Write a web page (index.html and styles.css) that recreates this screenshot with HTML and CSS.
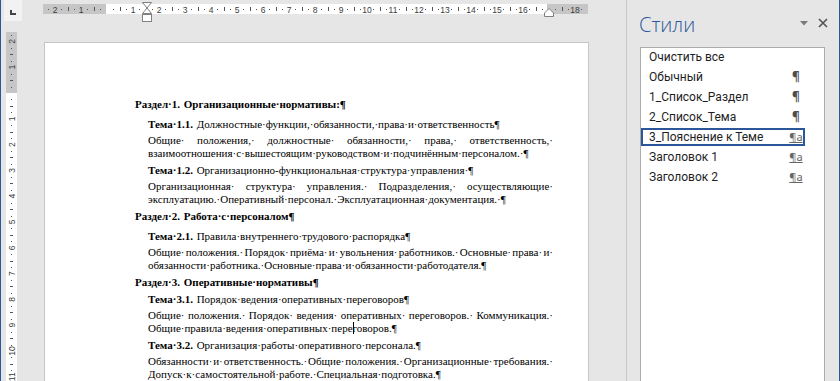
FILE: index.html
```html
<!DOCTYPE html>
<html lang="ru">
<head>
<meta charset="utf-8">
<link rel="stylesheet" href="styles.css">
</head>
<body>
<div class="window">
  <div class="doc-area">
    <div class="side">
      <div class="tab-sel">
        <svg width="18" height="21" viewBox="0 0 18 21"><path d="M6 10h2v3h4v2h-6z" fill="#444"/></svg>
      </div>
      <svg class="vruler" width="11" height="349" viewBox="0 0 11 349">
        <rect x="0" y="0" width="11" height="61" fill="#c6c6c6"/>
        <rect x="0" y="61" width="11" height="288" fill="#fff"/>
        <path fill="#555" d="M5 3h1v1h-1zM5 16h1v1h-1zM5 29h1v1h-1zM5 42h1v1h-1zM5 55h1v1h-1zM5 67h1v1h-1zM5 80h1v1h-1zM5 93h1v1h-1zM5 106h1v1h-1zM5 119h1v1h-1zM5 132h1v1h-1zM5 145h1v1h-1zM5 158h1v1h-1zM5 171h1v1h-1zM5 184h1v1h-1zM5 196h1v1h-1zM5 209h1v1h-1zM5 222h1v1h-1zM5 235h1v1h-1zM5 248h1v1h-1zM5 261h1v1h-1zM5 274h1v1h-1zM5 287h1v1h-1zM5 300h1v1h-1zM5 313h1v1h-1zM5 325h1v1h-1zM5 338h1v1h-1z"/>
        <path fill="#555" d="M4 22h3v1h-3zM4 48h3v1h-3zM4 74h3v1h-3zM4 100h3v1h-3zM4 125h3v1h-3zM4 151h3v1h-3zM4 177h3v1h-3zM4 203h3v1h-3zM4 229h3v1h-3zM4 254h3v1h-3zM4 280h3v1h-3zM4 306h3v1h-3zM4 332h3v1h-3z"/>
        <g class="rnum" text-anchor="middle">
          <text transform="translate(8.5 9.4) rotate(-90)">2</text>
          <text transform="translate(8.5 35.2) rotate(-90)">1</text>
          <text transform="translate(8.5 86.8) rotate(-90)">1</text>
          <text transform="translate(8.5 112.6) rotate(-90)">2</text>
          <text transform="translate(8.5 138.4) rotate(-90)">3</text>
          <text transform="translate(8.5 164.2) rotate(-90)">4</text>
          <text transform="translate(8.5 190) rotate(-90)">5</text>
          <text transform="translate(8.5 215.8) rotate(-90)">6</text>
          <text transform="translate(8.5 241.6) rotate(-90)">7</text>
          <text transform="translate(8.5 267.4) rotate(-90)">8</text>
          <text transform="translate(8.5 293.2) rotate(-90)">9</text>
          <text transform="translate(8.5 319) rotate(-90)">10</text>
          <text transform="translate(8.5 344.8) rotate(-90)">11</text>
        </g>
      </svg>
    </div>
    <div class="main">
      <svg class="hruler" width="546" height="24" viewBox="0 0 546 24">
        <defs>
          <pattern id="hticks" x="64" y="0" width="26" height="24" patternUnits="userSpaceOnUse">
            <rect x="6" y="9" width="1" height="1" fill="#555"/>
            <rect x="13" y="7" width="1" height="4" fill="#555"/>
            <rect x="19" y="9" width="1" height="1" fill="#555"/>
          </pattern>
        </defs>
        <rect x="0" y="4" width="63" height="10" fill="#c6c6c6"/>
        <rect x="63" y="4" width="441" height="10" fill="#fff"/>
        <rect x="504" y="4" width="41" height="10" fill="#c6c6c6"/>
        <rect x="0" y="4" width="545" height="10" fill="url(#hticks)"/>
        <g class="rnum" text-anchor="middle">
          <text x="12" y="12.5">2</text>
          <text x="38" y="12.5">1</text>
          <text x="90" y="12.5">1</text>
          <text x="116" y="12.5">2</text>
          <text x="142" y="12.5">3</text>
          <text x="168" y="12.5">4</text>
          <text x="194" y="12.5">5</text>
          <text x="220" y="12.5">6</text>
          <text x="246" y="12.5">7</text>
          <text x="272" y="12.5">8</text>
          <text x="298" y="12.5">9</text>
          <text x="324" y="12.5">10</text>
          <text x="350" y="12.5">11</text>
          <text x="376" y="12.5">12</text>
          <text x="402" y="12.5">13</text>
          <text x="428" y="12.5">14</text>
          <text x="454" y="12.5">15</text>
          <text x="480" y="12.5">16</text>
          <text x="532" y="12.5">18</text>
        </g>
        <g fill="#fff" stroke="#808080" stroke-width="1">
          <path d="M99.5 2.5h9l-4.5 5.5z"/>
          <path d="M104 8l4.5 5.5h-9z"/>
          <rect x="99.5" y="14.5" width="9" height="7"/>
          <path d="M506 8.5l4.5 4.5v3.5h-9v-3.5z"/>
        </g>
      </svg>
      <div class="page">
        <p class="razdel"><span class="num">Раздел·1. </span>Организационные· нормативы:¶</p>
        <p class="tema"><b class="num">Тема·1.1. </b>Должностные· функции,· обязанности,· права· и· ответственность¶</p>
        <p class="body"><span class="ln jl">Общие· положения,· должностные· обязанности,· права,· ответственность,·</span><span class="ln">взаимоотношения· с· вышестоящим· руководством· и· подчинённым· персоналом.·¶</span></p>
        <p class="tema"><b class="num">Тема·1.2. </b>Организационно-функциональная· структура· управления·¶</p>
        <p class="body"><span class="ln jl">Организационная· структура· управления.· Подразделения,· осуществляющие·</span><span class="ln">эксплуатацию.· Оперативный· персонал.· Эксплуатационная· документация.·¶</span></p>
        <p class="razdel"><span class="num">Раздел·2. </span>Работа· с· персоналом¶</p>
        <p class="tema"><b class="num">Тема·2.1. </b>Правила· внутреннего· трудового· распорядка¶</p>
        <p class="body"><span class="ln jl">Общие· положения.· Порядок· приёма· и· увольнения· работников.· Основные· права· и·</span><span class="ln">обязанности· работника.· Основные· права· и· обязанности· работодателя.¶</span></p>
        <p class="razdel tight"><span class="num">Раздел·3. </span>Оперативные· нормативы¶</p>
        <p class="tema"><b class="num">Тема·3.1. </b>Порядок· ведения· оперативных· переговоров¶</p>
        <p class="body"><span class="ln jl">Общие· положения.· Порядок· ведения· оперативных· переговоров.· Коммуникация.·</span><span class="ln">Общие· правила· ведения· оперативных· пере<span class="caret"></span>говоров.¶</span></p>
        <p class="tema"><b class="num">Тема·3.2. </b>Организация· работы· оперативного· персонала.¶</p>
        <p class="body"><span class="ln jl">Обязанности· и· ответственность.· Общие· положения.· Организационные· требования.·</span><span class="ln">Допуск· к· самостоятельной· работе.· Специальная· подготовка.¶</span></p>
      </div>
    </div>
  </div>
  <div class="pane">
    <div class="pane-head">
      <div class="pane-title">Стили</div>
      <svg class="pane-drop" width="8" height="5" viewBox="0 0 8 5"><path d="M0 0h8l-4 4.5z" fill="#7a7a7a"/></svg>
      <svg class="pane-close" width="10" height="10" viewBox="0 0 10 10"><path d="M1 1L9 9M9 1L1 9" stroke="#555" stroke-width="1.7" fill="none"/></svg>
    </div>
    <div class="styles-list">
      <div class="row"><span class="name">Очистить все</span></div>
      <div class="row"><span class="name">Обычный</span><span class="ic para">¶</span></div>
      <div class="row"><span class="name">1_Список_Раздел</span><span class="ic para">¶</span></div>
      <div class="row"><span class="name">2_Список_Тема</span><span class="ic para">¶</span></div>
      <div class="row sel"><span class="name">3_Пояснение к Теме</span><span class="ic link">¶a</span></div>
      <div class="row"><span class="name">Заголовок 1</span><span class="ic link">¶a</span></div>
      <div class="row"><span class="name">Заголовок 2</span><span class="ic link">¶a</span></div>
    </div>
  </div>
</div>
</body>
</html>
```

FILE: styles.css
```css
* { box-sizing: border-box; }
html, body { margin: 0; padding: 0; }
body {
  width: 840px;
  height: 381px;
  overflow: hidden;
  background: #e6e6e6;
}
.window {
  display: flex;
  height: 381px;
  border-left: 1px solid #2b579a;
  border-right: 1px solid #2b579a;
}
.doc-area {
  width: 626px;
  flex: none;
  display: flex;
  border-right: 1px solid #c6c6c6;
  overflow: hidden;
}
.side {
  width: 42px;
  flex: none;
  display: flex;
  flex-direction: column;
}
.tab-sel {
  margin-left: 3px;
  width: 18px;
  height: 21px;
  background: #f2f2f2;
}
.tab-sel svg { display: block; }
.vruler {
  display: block;
  margin: 11px 0 0 5px;
}
.rnum text {
  font-family: "Liberation Sans", Arial, sans-serif;
  font-size: 8.5px;
  fill: #3c3c3c;
}
.main {
  width: 583px;
  flex: none;
  display: flex;
  flex-direction: column;
}
.hruler { display: block; flex: none; }
.page {
  margin: 18px 0 0 1px;
  width: 545px;
  flex: 1;
  background: #fff;
  border: 1px solid #c6c6c6;
  border-bottom: 0;
  padding: 55px 35px 0 90px;
  font-family: "Liberation Serif", "Times New Roman", serif;
  font-size: 11px;
  line-height: 13px;
  color: #000;
}
.page p {
  margin: 0;
  word-spacing: -0.25em;
}
.page .razdel { font-weight: bold; margin-bottom: 7px; }
.page .razdel.tight { margin-bottom: 4px; }
.page .tema { margin: 0 0 3px 13px; }
.page .body { margin: 0 0 4px 13px; }
.num { word-spacing: 1px; }
.ln { display: block; }
.jl { text-align: justify; text-align-last: justify; }
.caret {
  display: inline-block;
  width: 1px;
  height: 12px;
  margin-right: -1px;
  background: #000;
  vertical-align: -2px;
}

.pane {
  flex: 1;
  display: flex;
  flex-direction: column;
  padding-left: 12px;
  overflow: hidden;
}
.pane-head {
  height: 47px;
  flex: none;
  display: flex;
  align-items: flex-start;
}
.pane-title {
  margin-top: 15px;
  font-family: "Open Sans", "Noto Sans", sans-serif;
  font-weight: 300;
  font-size: 20px;
  line-height: 20px;
  color: #2b579a;
}
.pane-drop { margin: 21px 0 0 auto; }
.pane-close { margin: 18px 11px 0 10px; }
.styles-list {
  margin-left: 1px;
  width: 185px;
  flex: 1;
  background: #fff;
  border: 1px solid #ababab;
  border-bottom: 0;
}
.row {
  display: flex;
  align-items: center;
  width: 164px;
  height: 18px;
  margin-bottom: 2px;
  padding-left: 8px;
  font-family: Roboto, "Noto Sans", sans-serif;
  font-size: 12px;
  line-height: 18px;
  color: #1e1e1e;
  white-space: nowrap;
}
.row .name { flex: 1; }
.row .ic {
  width: 16px;
  margin-right: 1px;
  text-align: center;
  font-family: "Noto Sans", sans-serif;
  color: #666;
}
.row .ic.para { font-size: 12px; font-weight: bold; color: #4d4d4d; }
.row .ic.link { font-size: 11px; text-decoration: underline; }
.row.sel { box-shadow: inset 0 0 0 2px #2b579a; }
```
